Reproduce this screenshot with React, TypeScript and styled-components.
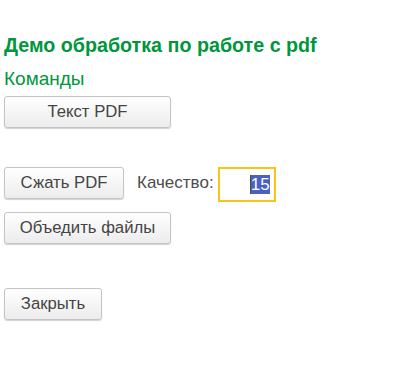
import React from "react";
import styled, { createGlobalStyle } from "styled-components";

const Global = createGlobalStyle`
  html, body { margin: 0; padding: 0; background: #fff; }
  body { font-family: Arial, "Liberation Sans", sans-serif; }
`;

const Page = styled.div`
  width: 403px;
  height: 382px;
  padding: 34px 0 0 4px;
  box-sizing: border-box;
  display: flex;
  flex-direction: column;
  align-items: flex-start;
`;

const Title = styled.div`
  font-family: "Liberation Sans", Arial, sans-serif;
  font-weight: bold;
  font-size: 19.7px;
  line-height: 22px;
  color: #00963c;
`;

const GroupTitle = styled.div`
  margin-top: 12px;
  font-family: "Liberation Sans", Arial, sans-serif;
  font-size: 19px;
  line-height: 22px;
  color: #00963c;
`;

const Button = styled.button<{ $w: number; $mt?: number }>`
  width: ${(p) => p.$w}px;
  height: 32px;
  margin-top: ${(p) => p.$mt ?? 0}px;
  box-sizing: border-box;
  border: 1px solid #c4c4c4;
  border-radius: 3px;
  background: linear-gradient(#ffffff, #ececec);
  box-shadow: 0 1px 1px rgba(0, 0, 0, 0.18);
  font-family: "Liberation Sans", Arial, sans-serif;
  font-size: 16.7px;
  color: #444;
  padding: 0;
  cursor: pointer;
`;

const Row = styled.div<{ $mt: number }>`
  display: flex;
  align-items: flex-start;
  margin-top: ${(p) => p.$mt}px;
`;

const Label = styled.span`
  margin-left: 13px;
  height: 32px;
  display: flex;
  align-items: center;
  font-family: "Liberation Sans", Arial, sans-serif;
  font-size: 17px;
  color: #4d4d4d;
`;

const Field = styled.div`
  margin-left: 4px;
  width: 58px;
  height: 35px;
  box-sizing: border-box;
  border: 2px solid #f5c518;
  display: flex;
  align-items: center;
  justify-content: flex-end;
  padding-right: 4px;
`;

const Selected = styled.span`
  background: #4a61c4;
  color: #fff;
  font-family: "Liberation Sans", Arial, sans-serif;
  font-size: 17px;
  line-height: 19px;
  border-left: 1px solid #5a4a20;
`;

export default function App() {
  return (
    <>
      <Global />
      <Page>
        <Title>Демо обработка по работе с pdf</Title>
        <GroupTitle>Команды</GroupTitle>
        <Button $w={167} $mt={6}>Текст PDF</Button>
        <Row $mt={39}>
          <Button $w={120}>Сжать PDF</Button>
          <Label>Качество:</Label>
          <Field>
            <Selected>15</Selected>
          </Field>
        </Row>
        <Button $w={167} $mt={10}>Объедить файлы</Button>
        <Button $w={98} $mt={44}>Закрыть</Button>
      </Page>
    </>
  );
}
